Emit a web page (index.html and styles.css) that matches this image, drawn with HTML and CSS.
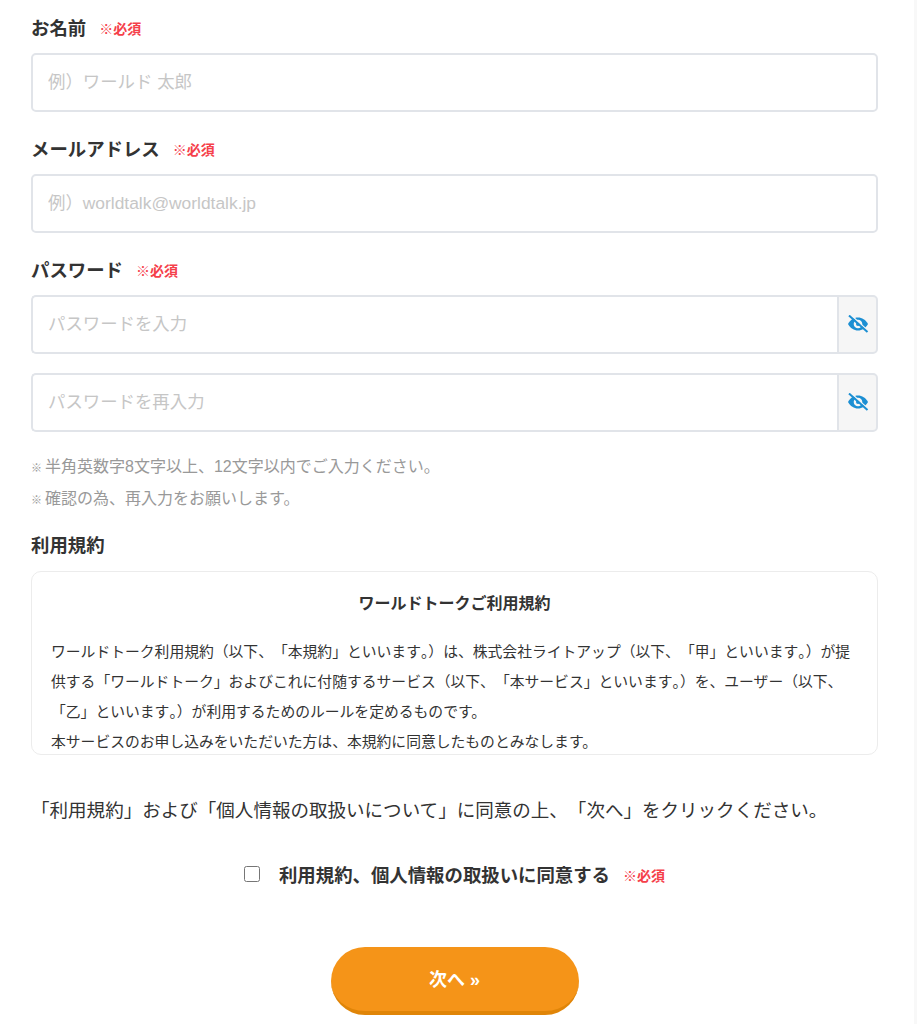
FILE: index.html
```html
<!DOCTYPE html>
<html lang="ja">
<head>
<meta charset="utf-8">
<title>会員登録</title>
<link rel="stylesheet" href="styles.css">
</head>
<body>
<main class="page">
  <form class="form">
    <div class="label-row"><span class="label">お名前</span><span class="req">※必須</span></div>
    <input class="field" type="text" placeholder="例）ワールド 太郎">
    <div class="label-row"><span class="label">メールアドレス</span><span class="req">※必須</span></div>
    <input class="field" type="text" placeholder="例）worldtalk@worldtalk.jp">
    <div class="label-row"><span class="label">パスワード</span><span class="req">※必須</span></div>
    <div class="group">
      <input class="field in-group" type="text" placeholder="パスワードを入力">
      <span class="eye"><svg viewBox="0 0 22 18" width="22" height="18"><path class="eye-body" d="M1 9C3.300 4.800 7 2.500 11 2.500s7.700 2.300 10 6.500c-2.300 4.200-6 6.500-10 6.500S3.300 13.200 1 9z"/><circle class="eye-hole" cx="11" cy="9" r="4.300"/><circle class="eye-pupil" cx="11" cy="9" r="2"/><path class="eye-gap" d="M3.800 0l17.500 16"/><path class="eye-cut" d="M2 .5l18.500 16.500"/></svg></span>
    </div>
    <div class="group second">
      <input class="field in-group" type="text" placeholder="パスワードを再入力">
      <span class="eye"><svg viewBox="0 0 22 18" width="22" height="18"><path class="eye-body" d="M1 9C3.300 4.800 7 2.500 11 2.500s7.700 2.300 10 6.500c-2.300 4.200-6 6.500-10 6.500S3.300 13.200 1 9z"/><circle class="eye-hole" cx="11" cy="9" r="4.300"/><circle class="eye-pupil" cx="11" cy="9" r="2"/><path class="eye-gap" d="M3.800 0l17.500 16"/><path class="eye-cut" d="M2 .5l18.500 16.500"/></svg></span>
    </div>
    <ul class="notes">
      <li><span class="mark">※</span>半角英数字8文字以上、12文字以内でご入力ください。</li>
      <li><span class="mark">※</span>確認の為、再入力をお願いします。</li>
    </ul>
    <div class="label-row terms-label"><span class="label">利用規約</span></div>
    <div class="terms">
      <h2 class="terms-title">ワールドトークご利用規約</h2>
      <div class="terms-text">
        <p class="line">ワールドトーク利用規約（以下、「本規約」といいます<span class="tight">。</span>）は、株式会社ライトアップ（以下、「甲」といいます<span class="tight">。</span>）が提</p>
        <p class="line">供する「ワールドトーク」およびこれに付随するサービス（以下、「本サービス」といいます<span class="tight">。</span>）を、ユーザー（以下、</p>
        <p class="line">「乙」といいます<span class="tight">。</span>）が利用するためのルールを定めるものです。</p>
        <p class="line">本サービスのお申し込みをいただいた方は、本規約に同意したものとみなします。</p>
      </div>
    </div>
    <p class="agree-note">「利用規約」および「個人情報の取扱いについて」に同意の上、「次へ」をクリックください。</p>
    <label class="agree"><input class="check" type="checkbox"><span class="agree-text">利用規約、個人情報の取扱いに同意する</span><span class="req">※必須</span></label>
    <div class="actions"><button class="next" type="button">次へ <span class="chev">»</span></button></div>
  </form>
</main>
</body>
</html>
```
FILE: styles.css
```css
* { box-sizing: border-box; }
html, body { margin: 0; padding: 0; height: 1024px; overflow: hidden; background: #fff; }
body { font-family: "Liberation Sans", "Noto Sans CJK JP", sans-serif; color: #333; text-spacing-trim: space-all; }
.page { min-height: 1024px; padding: 14px 36px 0 31px; border-right: 3px solid #f8f8f8; }
.form { display: flex; flex-direction: column; }
.label-row { display: flex; align-items: center; height: 25px; margin-bottom: 14px; }
.label-row + .field { margin-bottom: 23px; }
.label { font-size: 18.400px; font-weight: 700; color: #333; margin-right: 13px; }
.req { font-size: 14px; font-weight: 700; color: #f5404a; margin-top: 2px; }
.field { display: block; width: 100%; height: 59px; border: 2px solid #e1e4e9; border-radius: 5px; padding: 0 15px; font-size: 17.400px; font-family: inherit; background: #fff; outline: none; text-spacing-trim: space-all; }
.field::placeholder { color: #c6c6c6; opacity: 1; }
.group { display: flex; height: 59px; }
.group.second { margin-top: 19px; }
.in-group { flex: 1; border-radius: 5px 0 0 5px; border-right: 0; }
.eye { width: 41px; display: flex; align-items: center; justify-content: center; padding-bottom: 1px; background: #f6f6f6; border: 2px solid #e1e4e9; border-radius: 0 5px 5px 0; }
.eye-body { fill: #1c8fd3; }
.eye-hole { fill: #f6f6f6; }
.eye-pupil { fill: #1c8fd3; }
.eye-cut { stroke: #1c8fd3; stroke-width: 2; fill: none; }
.eye-gap { stroke: #f6f6f6; stroke-width: 1.500; fill: none; }
.notes { list-style: none; margin: 19px 0 0; padding: 0; }
.notes li { height: 32px; line-height: 32px; font-size: 16px; color: #999; }
.mark { font-size: 11px; font-weight: 700; margin-right: 3px; }
.terms-label { margin-top: 16px; margin-bottom: 15px; }
.terms { height: 184px; overflow: hidden; border: 1px solid #ececec; border-radius: 10px; padding: 20px 20px 0; background: #fff; }
.terms-title { margin: 0 0 21px; font-size: 16px; line-height: 24px; font-weight: 700; text-align: center; color: #333; }
.terms-text { margin-left: -1px; font-size: 14.800px; line-height: 30px; color: #333; }
.line { margin: 0; white-space: nowrap; }
.tight { font-feature-settings: "halt"; }
.agree-note { margin: 41px 0 0; text-align: left; font-size: 18.550px; line-height: 30px; color: #333; white-space: nowrap; }
.agree { display: flex; align-items: center; justify-content: center; height: 30px; margin-top: 33px; }
.check { width: 16px; height: 16px; margin: 0 19px 0 0; }
.agree-text { font-size: 18.400px; font-weight: 700; color: #333; margin-right: 13px; }
.actions { display: flex; justify-content: center; margin-top: 58px; }
.next { width: 248px; height: 68px; border: 0; border-bottom: 4px solid #e08508; border-radius: 34px; padding: 0 0 2px; background: #f59418; color: #fff; font-family: inherit; font-size: 18px; font-weight: 700; }
.chev { font-size: 18px; }
```
